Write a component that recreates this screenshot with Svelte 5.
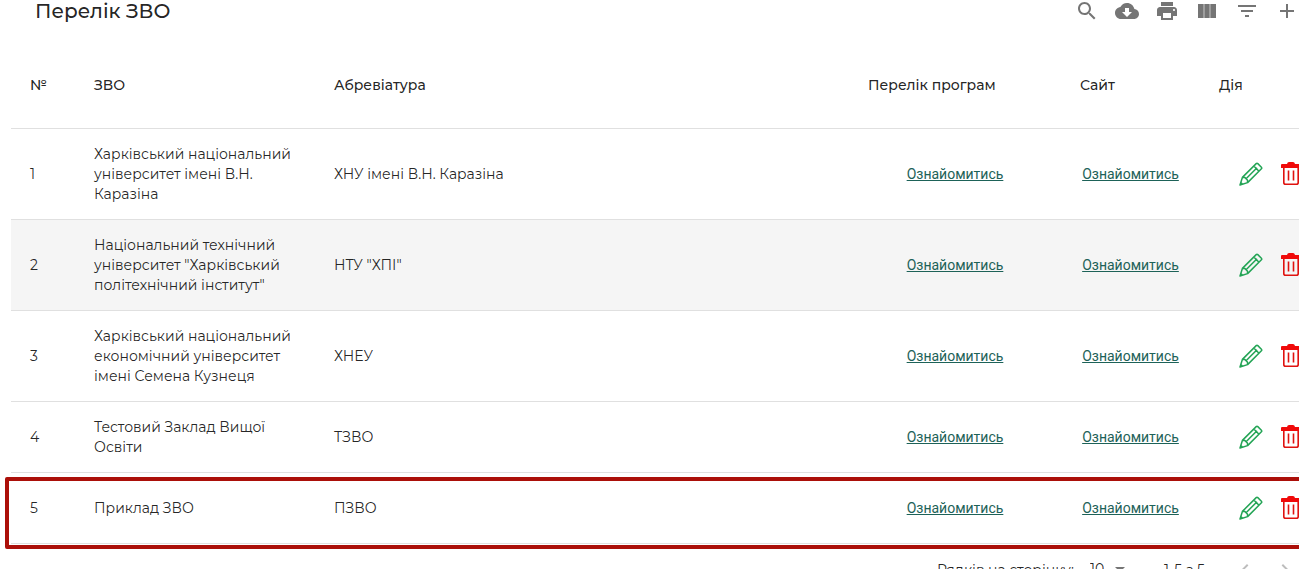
<script>
  const tools = [
    { label: 'Пошук', path: 'M15.5 14h-.79l-.28-.27C15.41 12.59 16 11.11 16 9.5 16 5.91 13.09 3 9.5 3S3 5.91 3 9.5 5.91 16 9.5 16c1.61 0 3.09-.59 4.23-1.57l.27.28v.79l5 4.99L20.49 19l-4.99-5zm-6 0C7.01 14 5 11.99 5 9.5S7.01 5 9.5 5 14 7.01 14 9.5 11.99 14 9.5 14z' },
    { label: 'Завантажити CSV', path: 'M19.35 10.04C18.67 6.59 15.64 4 12 4 9.11 4 6.6 5.64 5.35 8.04 2.34 8.36 0 10.91 0 14c0 3.31 2.69 6 6 6h13c2.76 0 5-2.24 5-5 0-2.64-2.05-4.78-4.65-4.96zM17 13l-5 5-5-5h3V9h4v4h3z' },
    { label: 'Друк', path: 'M19 8H5c-1.66 0-3 1.34-3 3v6h4v4h12v-4h4v-6c0-1.66-1.34-3-3-3zm-3 11H8v-5h8v5zm3-7c-.55 0-1-.45-1-1s.45-1 1-1 1 .45 1 1-.45 1-1 1zm-1-9H6v4h12V3z' },
    { label: 'Стовпці', path: 'M3 5h5.7v14H3zM9.3 5h5.4v14H9.3zM15.3 5H21v14h-5.7z' },
    { label: 'Фільтр', path: 'M10 18h4v-2h-4v2zM3 6v2h18V6H3zm3 7h12v-2H6v2z' },
    { label: 'Додати', path: 'M19 13h-6v6h-2v-6H5v-2h6V5h2v6h6v2z' }
  ];

  const rows = [
    { id: 1, name: 'Харківський національний університет імені В.Н. Каразіна', abbr: 'ХНУ імені В.Н. Каразіна' },
    { id: 2, name: 'Національний технічний університет "Харківський політехнічний інститут"', abbr: 'НТУ "ХПІ"' },
    { id: 3, name: 'Харківський національний економічний університет імені Семена Кузнеця', abbr: 'ХНЕУ' },
    { id: 4, name: 'Тестовий Заклад Вищої Освіти', abbr: 'ТЗВО' },
    { id: 5, name: 'Приклад ЗВО', abbr: 'ПЗВО' }
  ];
  const hovered = 2;
  const marked = 5;
</script>

<main>
  <div class="panel">
    <header>
      <h1>Перелік ЗВО</h1>
      <div class="tools">
        {#each tools as tool}
          <button type="button" aria-label={tool.label}>
            <svg viewBox="0 0 24 24" width="24" height="24"><path d={tool.path} /></svg>
          </button>
        {/each}
      </div>
    </header>

    <table>
      <colgroup>
        <col class="num" /><col class="name" /><col /><col class="programs" /><col class="site" /><col class="action" />
      </colgroup>
      <thead>
        <tr>
          <th>№</th><th>ЗВО</th><th>Абревіатура</th><th>Перелік програм</th><th>Сайт</th><th>Дія</th>
        </tr>
      </thead>
      <tbody>
        {#each rows as row}
          <tr class:hovered={row.id === hovered} class:marked={row.id === marked}>
            <td>{row.id}</td>
            <td>{row.name}</td>
            <td>{row.abbr}</td>
            <td class="center"><a href="#programs">Ознайомитись</a></td>
            <td class="center"><a href="#site">Ознайомитись</a></td>
            <td class="center">
              <div class="actions">
                <button type="button" class="edit" aria-label="Редагувати">
                  <svg viewBox="0 0 24 24" width="24" height="24">
                    <path d="M1 23 3.4 15.4 17.2 1.6Q18 .8 18.8 1.6L22.4 5.2Q23.2 6 22.4 6.8L8.6 20.6ZM3.4 15.4 6 15.6 8.4 18 8.6 20.6M6.8 17 18 5.8M14.8 4 20 9.2M1 23 3.2 20.8" />
                  </svg>
                </button>
                <button type="button" class="remove" aria-label="Видалити">
                  <svg viewBox="0 0 24 24" width="24" height="24">
                    <path class="lid" d="M3 2H8Q8.4 0 10 0H14Q15.6 0 16 2H21Q22 2 22 3V6H2V3Q2 2 3 2Z" />
                    <path d="M4.8 6V20.4Q4.8 22.2 6.6 22.2H17.4Q19.2 22.2 19.2 20.4V6M9.5 8.5V18.5M14.5 8.5V18.5" />
                  </svg>
                </button>
              </div>
            </td>
          </tr>
        {/each}
      </tbody>
    </table>

    <footer>
      <label for="per-page">Рядків на сторінку:</label>
      <div class="select">
        <select id="per-page">
          <option>10</option>
          <option>15</option>
          <option>20</option>
        </select>
        <svg viewBox="0 0 24 24" width="24" height="24"><path d="M7 10l5 5 5-5z" /></svg>
      </div>
      <span class="range">1-5 з 5</span>
      <button type="button" aria-label="Попередня сторінка" disabled>
        <svg viewBox="0 0 24 24" width="24" height="24"><path d="M15.41 7.41L14 6l-6 6 6 6 1.41-1.41L10.83 12z" /></svg>
      </button>
      <button type="button" aria-label="Наступна сторінка" disabled>
        <svg viewBox="0 0 24 24" width="24" height="24"><path d="M10 6L8.59 7.41 13.17 12l-4.58 4.59L10 18l6-6z" /></svg>
      </button>
    </footer>
  </div>
</main>

<style>
  :global(body) {
    background: #fff;
  }
  main {
    height: 100vh;
    overflow: hidden;
    font-family: Montserrat, Inter, sans-serif;
    font-size: 14px;
    line-height: 20px;
    color: rgba(0, 0, 0, 0.87);
  }
  /* The table is wider than the viewport and runs past its right edge. */
  .panel {
    margin: -21px -43px 0 11px;
  }
  header {
    display: flex;
    align-items: center;
    justify-content: space-between;
    height: 64px;
    padding: 0 35px 0 24px;
  }
  h1 {
    margin: 0;
    font-size: 20px;
    line-height: 32px;
    font-weight: 500;
  }
  .tools {
    display: flex;
  }
  button {
    display: flex;
    align-items: center;
    justify-content: center;
    width: 40px;
    height: 40px;
    padding: 0;
    border: 0;
    background: none;
    color: #757575;
    cursor: pointer;
  }
  svg {
    display: block;
    fill: currentColor;
  }
  table {
    width: 100%;
    table-layout: fixed;
    border-collapse: separate;
    border-spacing: 0;
  }
  .num { width: 64px; }
  .name { width: 240px; }
  .programs { width: 212px; }
  .site { width: 139px; }
  .action { width: 142px; }
  th,
  td {
    padding: 15px 16px 15px 19px;
    border-bottom: 1px solid #e0e0e0;
    text-align: left;
    vertical-align: middle;
  }
  th {
    height: 53px;
    padding-bottom: 17px;
    font-weight: 500;
  }
  td {
    height: 40px;
    font-weight: 400;
  }
  .center {
    padding-left: 0;
    padding-right: 0;
    font-family: Roboto, sans-serif;
    text-align: center;
  }
  .hovered {
    background: #f5f5f5;
  }
  .marked {
    position: relative;
  }
  .marked td:first-child::after {
    content: '';
    position: absolute;
    inset: 4px -6px -5px;
    border: 4px solid #ab0f09;
    border-radius: 2px;
    pointer-events: none;
  }
  a {
    color: #1d6258;
    text-decoration: underline;
  }
  .actions {
    display: flex;
    justify-content: center;
  }
  .actions svg {
    fill: none;
    stroke: currentColor;
    stroke-linejoin: round;
  }
  .edit {
    color: #23a455;
  }
  .edit svg {
    stroke-width: 1.5;
  }
  .remove {
    color: #e0120f;
  }
  .remove svg {
    stroke-width: 1.6;
  }
  .remove .lid {
    fill: #f00a0a;
    stroke: none;
  }
  footer {
    display: flex;
    align-items: center;
    justify-content: flex-end;
    height: 52px;
    padding-right: 37px;
  }
  .select {
    position: relative;
    margin: 0 32px 0 8px;
  }
  select {
    appearance: none;
    display: block;
    padding: 0 24px 2px 8px;
    border: 0;
    background: none;
    font: inherit;
    color: inherit;
  }
  .select svg {
    position: absolute;
    right: 0;
    top: -2px;
    color: #757575;
    pointer-events: none;
  }
  .range {
    margin-right: 20px;
  }
  footer button {
    color: #bdbdbd;
  }
</style>
